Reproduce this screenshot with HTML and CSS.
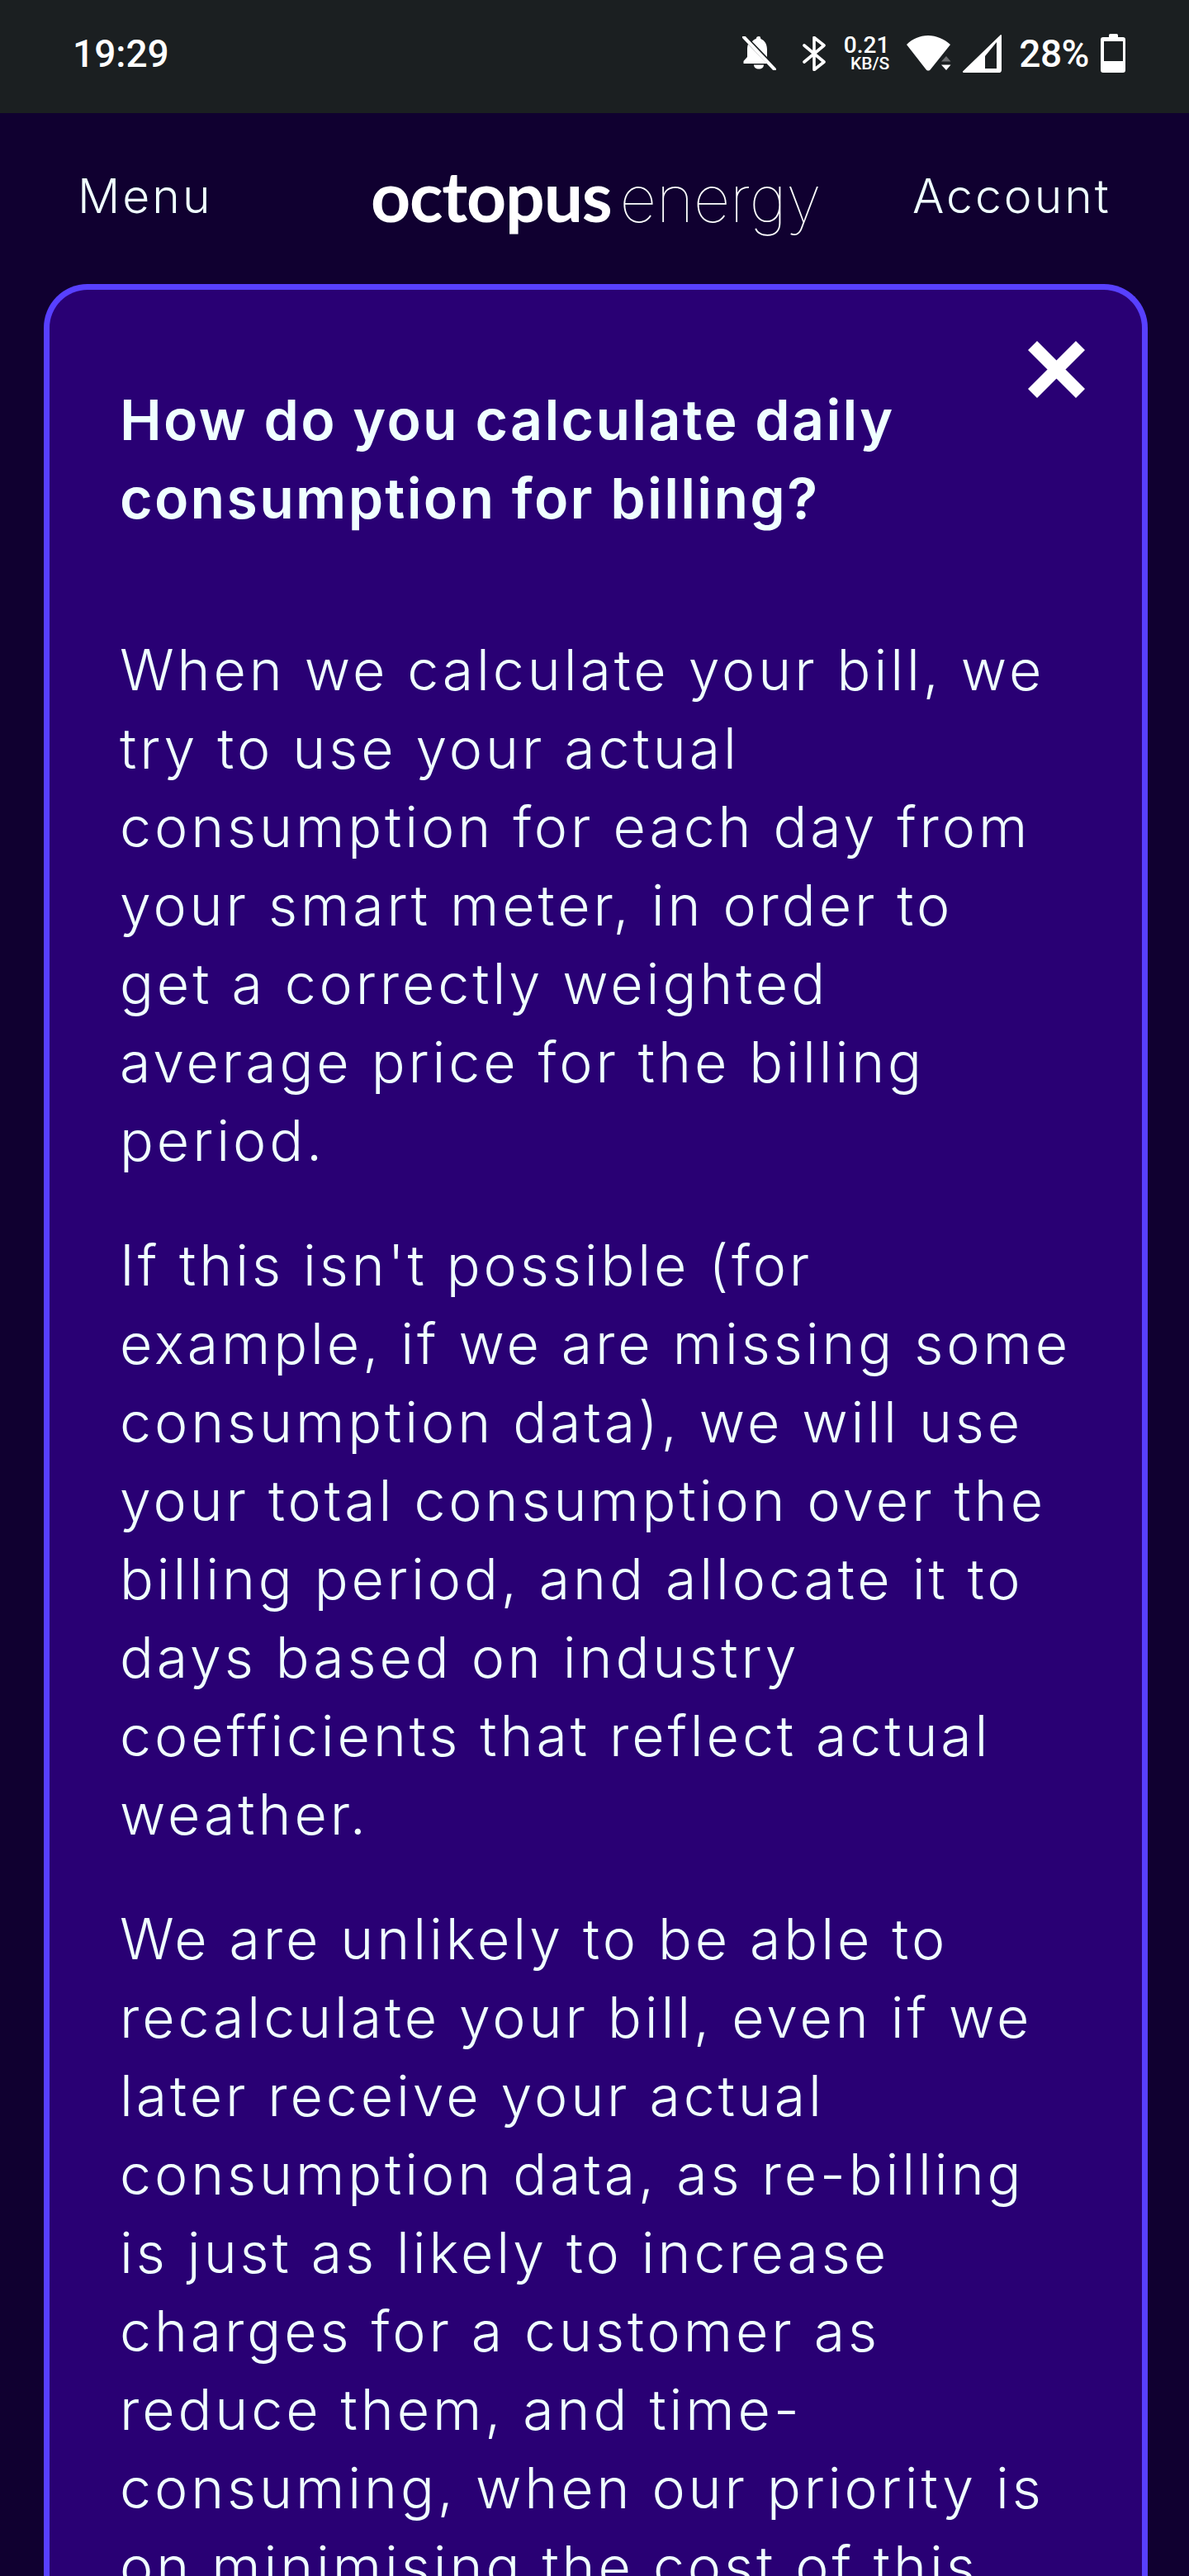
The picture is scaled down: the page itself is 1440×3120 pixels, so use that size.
FILE: index.html
```html
<!DOCTYPE html>
<html lang="en">
<head>
<meta charset="utf-8">
<title>Octopus Energy</title>
<link rel="stylesheet" href="styles.css">
</head>
<body>
<div class="status">
  <span class="time">19:29</span>
  <div class="status-icons">
    <svg class="ic-bell" viewBox="0 0 42 41"><path d="M21 0c-2 0-3 1.200-3.300 3-2 .6-3.600 1.700-4.800 3.200L31 25v-9c0-6-2.500-11-7.700-13C23 1.200 23 0 21 0zM8 9.500C7.300 11.300 7 13.500 7 16v9l-4.500 5v3H31z" fill="#fff"/><path d="M15 34.500h12c0 3-2.500 5-6 5s-6-2-6-5z" fill="#fff"/><path d="M3 1l37 39" stroke="#fff" stroke-width="4" stroke-linecap="round"/></svg>
    <svg class="ic-bt" viewBox="0 0 28 42"><path d="M2 11l24 20-12 9.500V1.500L26 11 2 31" fill="none" stroke="#fff" stroke-width="3.600" stroke-linejoin="round" stroke-linecap="round"/></svg>
    <div class="speed"><span class="speed-n">0.21</span><span class="speed-u">KB/S</span></div>
    <svg class="ic-wifi" viewBox="0 0 54 43"><path d="M0 11C7 4 16 0 26 0s19 4 27 11L29 41c-1.600 2-4 2-5.600 0z" fill="#fff"/><path d="M48 25l5.500 6.500H42z" fill="#6d6f71"/><path d="M42 35.500h11.500L48 42z" fill="#fff"/></svg>
    <svg class="ic-sig" viewBox="0 0 47 46"><path fill-rule="evenodd" d="M46 0c.7 0 1 .5 1 1.500V43c0 1.500-1 3-2.500 3H1.500C0 46-.5 44.500.5 44zM27 26v15h14V9z" fill="#fff"/></svg>
    <span class="batt-t">28%</span>
    <svg class="ic-batt" viewBox="0 0 31 47"><path fill-rule="evenodd" d="M10 2c0-1 .5-2 1.500-2h8c1 0 1.500 1 1.500 2v2h6c2 0 3 1 3 3v37c0 2-1 3-3 3H3c-2 0-3-1-3-3V7c0-2 1-3 3-3h7zM4 9v24h23V9z" fill="#fff"/></svg>
  </div>
</div>
<header class="nav">
  <a class="nav-link">Menu</a>
  <div class="logo"><span class="logo-a">octopus</span><span class="logo-b">energy</span></div>
  <a class="nav-link">Account</a>
</header>
<main class="card">
  <svg class="close" viewBox="0 0 69 69"><path d="M5.500 5.500l58 58M63.500 5.500l-58 58" stroke="#fff" stroke-width="15.600" fill="none"/></svg>
  <h2 class="title">How do you calculate daily<br>consumption for billing?</h2>
  <p class="para">When we calculate your bill, we<br>try to use your actual<br>consumption for each day from<br>your smart meter, in order to<br>get a correctly weighted<br>average price for the billing<br>period.</p>
  <p class="para">If this isn't possible (for<br>example, if we are missing some<br>consumption data), we will use<br>your total consumption over the<br>billing period, and allocate it to<br>days based on industry<br>coefficients that reflect actual<br>weather.</p>
  <p class="para">We are unlikely to be able to<br>recalculate your bill, even if we<br>later receive your actual<br>consumption data, as re-billing<br>is just as likely to increase<br>charges for a customer as<br>reduce them, and time-<br>consuming, when our priority is<br>on minimising the cost of this</p>
</main>
</body>
</html>
```

FILE: styles.css
```css
* { box-sizing: border-box; }
html, body { margin: 0; padding: 0; }
body {
  width: 1440px;
  height: 3120px;
  overflow: hidden;
  background: #100030;
  color: #f0ffff;
  font-family: "Inter", "Liberation Sans", sans-serif;
}
.status {
  height: 137px;
  background: #1b1f21;
  display: flex;
  justify-content: space-between;
  align-items: center;
  padding: 0 76px 8px 88px;
  color: #fff;
  font-family: "Roboto", sans-serif;
}
.time { font-size: 46px; font-weight: 500; }
.status-icons { display: flex; align-items: center; }
.ic-bell { width: 42px; height: 41px; margin-right: 32px; }
.ic-bt { width: 28px; height: 42px; margin-right: 26px; }
.speed { display: flex; flex-direction: column; align-items: flex-end; width: 51px; margin-right: 21px; font-weight: 500; }
.speed-n { font-size: 28px; line-height: 25px; }
.speed-u { font-size: 21px; line-height: 20px; }
.ic-wifi { width: 54px; height: 43px; margin-right: 14px; }
.ic-sig { width: 47px; height: 46px; margin-right: 21px; }
.batt-t { font-size: 46px; font-weight: 500; letter-spacing: -.5px; margin-right: 14px; }
.ic-batt { width: 31px; height: 47px; }
.nav {
  height: 207px;
  padding: 0 0 6px 94px;
  display: grid;
  grid-template-columns: 355px 656px auto;
  align-items: center;
}
.nav-link { font-size: 57px; font-weight: 300; letter-spacing: 3px; }
.logo { display: flex; align-items: baseline; color: #fff; line-height: 1; }
.logo-a { font-size: 84px; font-weight: 700; letter-spacing: -1.200px; font-family: "Lato", sans-serif; }
.logo-b { font-size: 78px; font-weight: 100; margin-left: 10px; letter-spacing: -.5px; }
.card {
  position: relative;
  width: 1337px;
  margin-left: 53px;
  background: #290074;
  border: 7px solid #5840ff;
  border-bottom: 0;
  border-radius: 53px 53px 0 0;
  padding: 110px 60px 0 85px;
  height: 2776px;
  overflow: hidden;
}
.close { position: absolute; top: 62px; right: 69px; width: 69px; height: 69px; }
.title { margin: 0 0 113px; font-size: 68px; line-height: 95px; font-weight: 600; letter-spacing: 2.300px; }
.para { margin: 0 0 56px; font-size: 68px; line-height: 95px; font-weight: 300; letter-spacing: 3.900px; }
```
